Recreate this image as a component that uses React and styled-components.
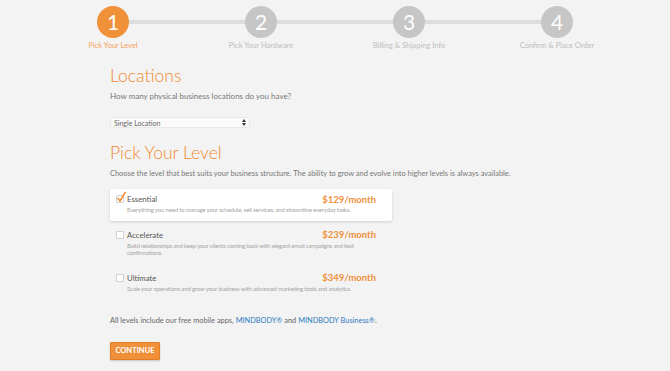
import React, { useState } from "react";
import styled, { createGlobalStyle } from "styled-components";

const GlobalStyle = createGlobalStyle`
  html, body {
    margin: 0;
    padding: 0;
    background: #f3f3f3;
    font-family: Lato, "Open Sans", sans-serif;
  }
`;

const STEPS = [
  "Pick Your Level",
  "Pick Your Hardware",
  "Billing & Shipping Info",
  "Confirm & Place Order",
];

const LEVELS = [
  {
    name: "Essential",
    price: "$129/month",
    text: "Everything you need to manage your schedule, sell services, and streamline everyday tasks.",
  },
  {
    name: "Accelerate",
    price: "$239/month",
    text: "Build relationships and keep your clients coming back with elegant email campaigns and text confirmations.",
  },
  {
    name: "Ultimate",
    price: "$349/month",
    text: "Scale your operations and grow your business with advanced marketing tools and analytics.",
  },
];

export default function App() {
  const [level, setLevel] = useState(0);

  return (
    <>
      <GlobalStyle />
      <Page>
        <Stepper>
          {STEPS.map((label, idx) => (
            <Step key={label} $first={idx === 0} $last={idx === STEPS.length - 1}>
              <Circle $active={idx === 0}>{idx + 1}</Circle>
              <StepLabel $active={idx === 0}>{label}</StepLabel>
            </Step>
          ))}
        </Stepper>

        <Content>
          <Heading>Locations</Heading>
          <Lead>How many physical business locations do you have?</Lead>
          <SelectBox>
            <span>Single Location</span>
            <svg width="4" height="7" viewBox="0 0 4 7">
              <path d="M0 3 L2 0 L4 3 Z" fill="#333" />
              <path d="M0 4 L2 7 L4 4 Z" fill="#333" />
            </svg>
          </SelectBox>

          <Heading $top={14}>Pick Your Level</Heading>
          <Lead $size={7.45}>
            Choose the level that best suits your business structure. The ability to grow and evolve into higher levels is always available.
          </Lead>

          <Levels>
            {LEVELS.map((item, idx) => (
              <LevelCard
                key={item.name}
                $selected={idx === level}
                onClick={() => setLevel(idx)}
              >
                <LevelHead>
                  <Check>
                    {idx === level && (
                      <svg width="11" height="12" viewBox="0 0 11 12">
                        <path
                          d="M1.5 7 L4 10 L9.5 0.8"
                          fill="none"
                          stroke="#f0862a"
                          strokeWidth="1.5"
                        />
                      </svg>
                    )}
                  </Check>
                  <LevelName>{item.name}</LevelName>
                  <Price>{item.price}</Price>
                </LevelHead>
                <LevelText>{item.text}</LevelText>
              </LevelCard>
            ))}
          </Levels>

          <Note>
            All levels include our free mobile apps, <Link>MINDBODY®</Link> and{" "}
            <Link>MINDBODY Business®</Link>.
          </Note>

          <Button>Continue</Button>
        </Content>
      </Page>
    </>
  );
}

const Page = styled.div`
  width: 670px;
  height: 371px;
  overflow: hidden;
`;

const Stepper = styled.div`
  width: 592px;
  margin: 0 auto;
  padding-top: 6px;
  display: grid;
  grid-template-columns: repeat(4, 1fr);
`;

const Step = styled.div`
  position: relative;
  display: flex;
  flex-direction: column;
  align-items: center;

  &::before {
    content: "";
    position: absolute;
    top: 14px;
    height: 4px;
    background: #dddddd;
    left: ${(p) => (p.$first ? "50%" : "0")};
    right: ${(p) => (p.$last ? "50%" : "0")};
  }
`;

const Circle = styled.div`
  position: relative;
  z-index: 1;
  width: 32px;
  height: 32px;
  border-radius: 50%;
  background: ${(p) => (p.$active ? "#f0913a" : "#c6c6c6")};
  color: #fff;
  font-size: 21px;
  line-height: 32px;
  text-align: center;
`;

const StepLabel = styled.div`
  margin-top: 3px;
  font-size: 7.5px;
  line-height: 10px;
  color: ${(p) => (p.$active ? "#f5a15a" : "#bdbdbd")};
`;

const Content = styled.div`
  width: 450px;
  margin: 0 auto;
  padding-top: 14px;
`;

const Heading = styled.h1`
  margin: ${(p) => p.$top || 0}px 0 0;
  font-size: 17.5px;
  font-weight: 300;
  color: #f08a30;
  line-height: 22px;
`;

const Lead = styled.p`
  margin: 3.5px 0 0;
  font-size: ${(p) => p.$size || 8}px;
  color: #777;
  line-height: 11px;
`;

const SelectBox = styled.div`
  margin-top: 15.5px;
  width: 140px;
  height: 11px;
  box-sizing: border-box;
  background: #fafafa;
  border: 1px solid #e8e8e8;
  border-radius: 3px;
  display: flex;
  align-items: center;
  justify-content: space-between;
  padding: 0 3px;
  font-size: 7px;
  color: #666;
`;

const Levels = styled.div`
  margin-top: 10.5px;
  width: 282px;
  display: flex;
  flex-direction: column;
  gap: 4px;
`;

const LevelCard = styled.div`
  padding: 5px 16px 7px 6px;
  background: ${(p) => (p.$selected ? "#fff" : "transparent")};
  box-shadow: ${(p) => (p.$selected ? "0 1px 3px rgba(0,0,0,0.15)" : "none")};
  border-radius: 2px;
  cursor: pointer;
`;

const LevelHead = styled.div`
  display: flex;
  align-items: center;
  height: 10px;
`;

const Check = styled.span`
  box-sizing: border-box;
  width: 8px;
  height: 8px;
  border: 1px solid #cfcfcf;
  border-radius: 1px;
  background: #fff;
  position: relative;
  margin-right: 3px;

  svg {
    position: absolute;
    left: -1px;
    top: -5px;
  }
`;

const LevelName = styled.span`
  font-size: 7.8px;
  color: #555;
  flex: 1;
`;

const Price = styled.span`
  font-size: 9.5px;
  font-weight: 700;
  color: #f0913a;
`;

const LevelText = styled.div`
  margin: 2px 0 0 11px;
  max-width: 228px;
  font-size: 6px;
  letter-spacing: -0.16px;
  line-height: 7.6px;
  color: #a4a4a4;
`;

const Note = styled.p`
  margin: 15.5px 0 0;
  font-size: 7.4px;
  line-height: 11px;
  color: #666;
`;

const Link = styled.a`
  color: #2d7bbd;
  text-decoration: none;
`;

const Button = styled.button`
  display: block;
  margin-top: 16px;
  width: 50px;
  height: 18px;
  background: #f0913a;
  border: 1px solid #e07d25;
  border-radius: 1px;
  box-shadow: 0 1px 2px rgba(0,0,0,0.2);
  color: #fff;
  font-family: Lato, sans-serif;
  font-weight: 700;
  font-size: 7.5px;
  text-transform: uppercase;
  padding: 0;
`;
